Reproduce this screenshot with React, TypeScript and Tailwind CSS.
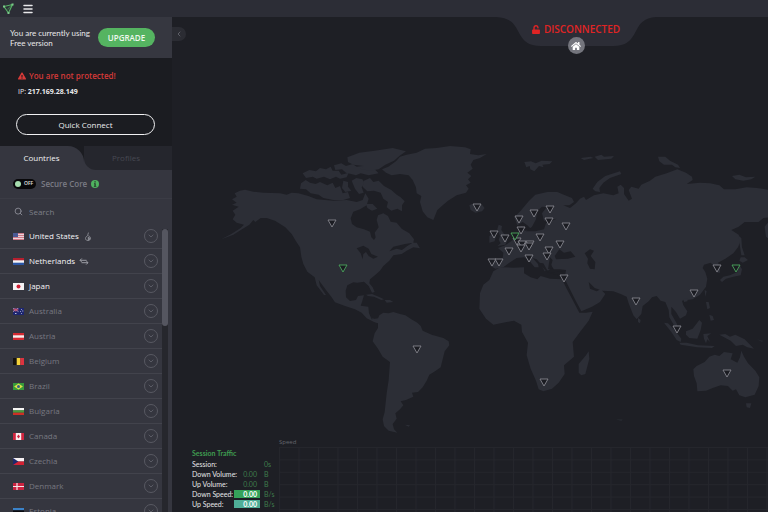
import { useState } from 'react'
import type { ReactNode } from 'react'
import { FaExclamationTriangle, FaHome, FaUnlock } from 'react-icons/fa'
import { ChevronDown, ChevronLeft, Menu, Search } from 'lucide-react'
import { clsx } from 'clsx'

type Country = { name: string; flag: ReactNode; available?: boolean; feature?: 'tor' | 'p2p' }

const countries: Country[] = [
  {
    name: 'United States',
    available: true,
    feature: 'tor',
    flag: (
      <>
        <path fill="#e9d5da" d="M0 0h11v7H0z" />
        <path stroke="#d07a88" d="M0 .5h11M0 2.5h11M0 4.5h11M0 6.5h11" />
        <path fill="#4b5a94" d="M0 0h5v4H0z" />
      </>
    ),
  },
  {
    name: 'Netherlands',
    available: true,
    feature: 'p2p',
    flag: (
      <>
        <path fill="#f4f4f6" d="M0 0h11v7H0z" />
        <path fill="#b5202f" d="M0 0h11v2.3H0z" />
        <path fill="#2a55a5" d="M0 4.7h11V7H0z" />
      </>
    ),
  },
  {
    name: 'Japan',
    available: true,
    flag: (
      <>
        <path fill="#f6f3f4" d="M0 0h11v7H0z" />
        <circle cx="5.5" cy="3.5" r="2" fill="#cf1f33" />
      </>
    ),
  },
  {
    name: 'Australia',
    flag: (
      <>
        <path fill="#1d2670" d="M0 0h11v7H0z" />
        <path stroke="#d9b3c2" strokeWidth=".8" d="M0 0l5.5 3.6M5.5 0L0 3.6" />
        <path stroke="#c94863" strokeWidth=".9" d="M2.8 0v3.6M0 1.8h5.5" />
        <path fill="#dfe3f4" d="M2.2 5h1.2v1H2.2zM8 1h.8v.8H8zM9.4 2.6h.8v.8h-.8zM7 3h.8v.8H7zM8.2 5.2H9V6h-.8z" />
      </>
    ),
  },
  {
    name: 'Austria',
    flag: (
      <>
        <path fill="#d42a32" d="M0 0h11v7H0z" />
        <path fill="#f6eff0" d="M0 2.3h11v2.4H0z" />
      </>
    ),
  },
  {
    name: 'Belgium',
    flag: (
      <>
        <path fill="#15130f" d="M0 0h4v7H0z" />
        <path fill="#f5d23a" d="M3.7 0h3.6v7H3.7z" />
        <path fill="#dc3340" d="M7.3 0H11v7H7.3z" />
      </>
    ),
  },
  {
    name: 'Brazil',
    flag: (
      <>
        <path fill="#379a3b" d="M0 0h11v7H0z" />
        <path fill="#dbe04a" d="M5.5.6l4.4 2.9-4.4 2.9-4.4-2.9z" />
        <circle cx="5.5" cy="3.5" r="1.5" fill="#315f8a" />
      </>
    ),
  },
  {
    name: 'Bulgaria',
    flag: (
      <>
        <path fill="#f6f5f4" d="M0 0h11v2.4H0z" />
        <path fill="#4a9a3b" d="M0 2.3h11v2.4H0z" />
        <path fill="#cf2f25" d="M0 4.7h11V7H0z" />
      </>
    ),
  },
  {
    name: 'Canada',
    flag: (
      <>
        <path fill="#f8eeef" d="M0 0h11v7H0z" />
        <path fill="#cf2640" d="M0 0h2.8v7H0zM8.2 0H11v7H8.2zM5.5 1.5l1.5 2-1.5 2-1.5-2z" />
      </>
    ),
  },
  {
    name: 'Czechia',
    flag: (
      <>
        <path fill="#f6f1f3" d="M0 0h11v3.5H0z" />
        <path fill="#d32234" d="M0 3.5h11V7H0z" />
        <path fill="#1f2a6c" d="M0 0l5.3 3.5L0 7z" />
      </>
    ),
  },
  {
    name: 'Denmark',
    flag: (
      <>
        <path fill="#cb2340" d="M0 0h11v7H0z" />
        <path stroke="#f6e6ea" strokeWidth="1.2" d="M4 0v7M0 3.5h11" />
      </>
    ),
  },
  {
    name: 'Estonia',
    flag: (
      <>
        <path fill="#3b83c9" d="M0 0h11v2.4H0z" />
        <path fill="#0b0b10" d="M0 2.3h11v2.4H0z" />
        <path fill="#f3f3f3" d="M0 4.7h11V7H0z" />
      </>
    ),
  },
]

const servers: [number, number, boolean?][] = [
  [332, 223], [343, 268, true], [417, 349], [544, 382], [477, 207],
  [519, 219], [534, 213], [550, 209], [549, 221], [566, 226],
  [521, 230], [494, 234], [505, 238], [517, 241], [540, 237],
  [560, 244], [509, 251], [522, 244], [521, 248], [530, 244],
  [529, 246], [549, 250], [547, 256], [529, 258], [492, 262],
  [499, 262], [564, 278], [515, 236, true], [717, 268], [736, 268, true],
  [636, 301], [694, 293], [677, 329], [727, 373],
]

const traffic = [
  { label: 'Session:', value: '', unit: '0s', bar: '' },
  { label: 'Down Volume:', value: '0.00', unit: 'B', bar: '' },
  { label: 'Up Volume:', value: '0.00', unit: 'B', bar: '' },
  { label: 'Down Speed:', value: '0.00', unit: 'B/s', bar: 'bg-[#35a35a] font-bold text-white' },
  { label: 'Up Speed:', value: '0.00', unit: 'B/s', bar: 'bg-[#4fae97] font-bold text-white' },
]

function TitleBar() {
  return (
    <header className="flex h-[17px] shrink-0 items-center gap-[7px] bg-[#2c2d36] px-[3px]">
      <svg className="h-3 w-3" viewBox="0 0 12 12" fill="none" stroke="#56b366" strokeWidth="1.1">
        <path d="M1 3.500l8.500-2L5.500 10z" />
        <path d="M9.500 1.500L4.500 6.500" strokeOpacity=".45" />
        <path fill="#7cc98a" stroke="none" d="M0 2.500h2v2H0zM8.500.5h2v2h-2zM4.500 9h2v2h-2z" />
      </svg>
      <button aria-label="Menu" className="text-[#e8e8ea]">
        <Menu className="h-3 w-3" strokeWidth={3} />
      </button>
    </header>
  )
}

function CountryRow({ country }: { country: Country }) {
  return (
    <li
      className={clsx(
        'flex h-[25px] shrink-0 items-center border-b border-[#42434c] pl-[13px] pr-1',
        country.available ? 'font-medium text-[#f4f4f6]' : 'text-[#777881]'
      )}
    >
      <svg className="mr-[5px] h-[7px] w-[11px]" viewBox="0 0 11 7">
        {country.flag}
      </svg>
      <span>{country.name}</span>
      {country.feature === 'tor' && (
        <svg className="ml-[5px] h-[9px] w-2" viewBox="0 0 8 9" fill="none" stroke="#8d8e96" strokeWidth=".9">
          <path d="M5 .5C3.500 1.500 4 2.800 3.800 3.500 2.500 4.400 1.500 5.200 1.500 6.500S2.600 8.500 4 8.500 6.500 7.700 6.500 6.300 5.300 4.300 4.600 3.500" />
          <path fill="#8d8e96" d="M4.300 5v3c1 0 1.600-.7 1.500-1.600S4.900 5.600 4.300 5z" />
        </svg>
      )}
      {country.feature === 'p2p' && (
        <svg className="ml-1 h-[7px] w-[10px]" viewBox="0 0 10 7" fill="none" stroke="#9c9da4">
          <path d="M7.500 2.300H1M2.800.500L1 2.300l1.800 1.800M2.500 4.700H9M7.200 2.900L9 4.700 7.200 6.500" />
        </svg>
      )}
      <button
        aria-label={`Show ${country.name} servers`}
        className="ml-auto flex h-[14px] w-[14px] items-center justify-center rounded-full border border-[#585962] text-[#6d6e77]"
      >
        <ChevronDown className="h-2 w-2" />
      </button>
    </li>
  )
}

function Sidebar() {
  const [secureCore, setSecureCore] = useState(false)

  return (
    <aside className="flex w-[172px] shrink-0 flex-col bg-[#35363f]">
      {/* Plan */}
      <div className="flex h-[41px] shrink-0 items-center justify-between bg-[#363740] pl-[10px] pr-[17px] text-[#e8e8ea]">
        <p className="font-['Lato','Open_Sans',sans-serif] leading-[10px]">
          You are currently using
          <br />
          Free version
        </p>
        <button className="h-[19px] w-[57px] rounded-full bg-[#55b461] font-semibold text-[#eef8ef]">
          UPGRADE
        </button>
      </div>

      {/* Status */}
      <div className="flex h-[88px] shrink-0 flex-col bg-[#1b1c21] px-4 pt-3">
        <p className="flex items-center gap-[3px] pl-[2px] font-semibold leading-3 text-[#d63a38]">
          <FaExclamationTriangle className="h-2 w-2" />
          You are not protected!
        </p>
        <p className="mt-1 pl-[2px] text-[7px] leading-3 text-[#e8e8ea]">
          IP: <b>217.169.28.149</b>
        </p>
        <button className="mt-4 h-[21px] w-full max-w-[139px] rounded-full border border-[#f0f0f2] text-[#ececee]">
          Quick Connect
        </button>
      </div>

      {/* Tabs */}
      <div role="tablist" className="flex h-6 shrink-0 bg-[#1b1c21]">
        <button
          role="tab"
          aria-selected="true"
          className="w-[84px] rounded-tr-2xl bg-[#35363f] pr-px font-medium text-[#f1f1f3]"
        >
          Countries
        </button>
        <div className="flex flex-1 bg-[#35363f]">
          <button
            role="tab"
            aria-selected="false"
            className="flex-1 rounded-bl-xl bg-[#25262d] pr-1 text-[#474852]"
          >
            Profiles
          </button>
        </div>
      </div>

      <label className="flex h-7 shrink-0 items-center pl-[13px] font-semibold text-[#7b7c85]">
        <input
          type="checkbox"
          className="sr-only"
          checked={secureCore}
          onChange={(e) => setSecureCore(e.target.checked)}
        />
        <span className="flex h-[10px] w-[23px] items-center gap-[3px] rounded-full bg-[#08080a] px-[2px] text-[5px] text-[#e4e4e4]">
          <span className="h-[6px] w-[6px] rounded-full bg-[#a5dcae]" />
          {secureCore ? 'ON' : 'OFF'}
        </span>
        <span className="ml-[5px]">Secure Core</span>
        <svg className="ml-1 h-2 w-2" viewBox="0 0 8 8">
          <circle cx="4" cy="4" r="4" fill="#4fb35f" />
          <path fill="#25362b" d="M3.400 1.200h1.300v1.300H3.400zM3 3.200h1.700v2.700h.6v.8H2.900v-.8h.5V4H3z" />
        </svg>
      </label>

      <label className="flex h-[26px] shrink-0 items-center border-t border-[#3b3c45] pl-[14px] text-[#888992]">
        <Search className="mr-[6px] h-[9px] w-[9px]" strokeWidth={2.5} />
        <input
          aria-label="Search countries"
          placeholder="Search"
          className="w-28 bg-transparent outline-none placeholder:text-[#7f8089]"
        />
      </label>

      <div className="flex min-h-0 flex-1">
        <ul className="flex min-w-0 flex-1 flex-col overflow-hidden">
          {countries.map((country) => (
            <CountryRow key={country.name} country={country} />
          ))}
        </ul>
        <div className="mr-1 mt-[5px] w-[6px] bg-[#26272d]">
          <div className="h-[97px] rounded-full bg-[#555660]" />
        </div>
      </div>
    </aside>
  )
}

function WorldMap() {
  return (
    <svg className="block w-full shrink-0" viewBox="172 17 596 420" role="img" aria-label="Server map">
      <g fill="#2c2e36">
        {/* North America */}
        <g transform="translate(220 140) scale(.33333)">
          <path d="M36 178L50 170 44 160 60 152 75 149 100 155 130 158 180 160 200 164 215 158 235 160 265 168 290 178 340 182 380 180 410 186 428 180 436 160 446 176 440 196 420 208 400 215 392 235 396 252 410 262 432 268 450 275 454 292 462 300 467 292 464 278 476 262 470 240 474 226 490 220 504 228 512 245 530 248 545 266 568 280 582 298 580 308 555 312 520 320 508 334 530 326 546 330 562 318 578 308 590 308 600 325 580 322 560 332 545 342 520 346 508 362 490 378 480 392 462 408 450 418 448 430 458 442 464 456 456 458 446 438 432 425 412 428 400 427 382 436 377 452 378 472 390 483 408 480 414 468 432 466 426 486 422 497 445 500 447 520 455 538 475 535 492 545 480 552 462 546 440 535 425 518 405 508 375 498 345 487 335 472 318 450 296 420 300 438 318 465 312 465 290 436 284 412 262 395 250 372 244 350 240 322 228 304 215 282 196 262 165 242 140 234 122 234 106 246 100 240 88 254 66 268 40 284 4 298 34 282 62 264 72 254 50 248 38 238 46 224 38 212 56 200 36 194 50 188z" />
          <path d="M243 130L257 120 270 128 287 132 300 126 322 136 338 128 346 144 360 138 368 160 384 156 390 174 370 180 340 180 310 174 296 164 272 160 258 148 240 146z" />
          <path d="M248 100L268 90 288 94 300 84 318 88 332 80 338 92 356 92 364 104 386 98 380 112 360 116 348 110 330 118 312 110 290 116 278 110 258 114z" />
          <path d="M342 76L364 70 378 78 398 72 410 80 428 78 442 88 466 90 476 100 446 106 422 100 408 106 378 98 366 88 346 90z" />
          <path d="M382 52L418 38 464 32 518 24 558 34 538 48 522 62 496 74 476 88 450 92 420 86 430 78 400 74 384 66z" />
          <path d="M395 122L409 114 427 118 435 130 425 142 431 158 417 162 405 146zM370 122L384 126 384 140 394 152 376 156 366 144z" />
          <path d="M432 122L450 114 460 126 476 122 492 138 514 150 530 164 542 172 554 184 546 196 546 214 532 206 514 212 500 202 504 186 490 176 482 158 462 152 442 154 428 140zM438 192L458 192 472 206 456 212 442 204z" />
          <path d="M486 88L505 80 528 64 540 50 560 44 590 38 615 26 650 24 690 18 735 22 752 28 750 42 775 46 800 42 780 54 760 60 752 74 758 86 742 98 754 108 744 118 752 128 738 136 746 146 738 158 710 166 684 182 668 196 652 210 640 240 622 232 608 214 600 186 604 168 590 160 588 142 578 120 566 106 540 102 515 106 498 98z" />
          <path d="M748 196L756 192 766 200 786 194 794 204 786 214 766 218 752 210z" />
          <path fill="#1e1f25" d="M410 325L430 317 446 326 454 342 474 350 460 356 446 348 438 336 430 342 428 358 422 340z" />
        </g>

        {/* South America and Africa */}
        <g transform="translate(350 280) scale(.33333)">
          <path d="M60 112L82 120 88 106 100 98 116 100 130 96 150 102 166 106 184 118 202 128 212 138 218 152 245 164 280 174 296 184 298 196 284 214 278 238 272 262 255 274 238 284 230 302 218 322 204 336 186 338 190 350 168 360 152 364 160 376 150 388 136 400 140 416 128 432 132 448 142 458 116 452 102 438 98 418 104 396 110 340 116 300 120 246 98 230 84 206 68 184 74 160 84 144 84 126z" />
          <path d="M48 44L66 42 86 50 102 58 94 60 72 50 54 48zM104 60L120 60 130 66 110 68zM164 434L180 436 176 440z" />
          <path d="M390 40L400 14 418 0 430-26 450-38 490-37 522-38 522-20 542-8 562-2 572-12 600-4 636-2 650 26 668 60 688 98 708 98 728 95 716 122 690 156 668 186 672 230 642 256 644 282 626 308 606 326 580 334 566 328 558 302 542 266 530 226 534 188 516 156 514 134 492 122 470 126 430 134 408 116 388 86z" />
          <path d="M686 278L686 252 708 226 716 214 718 236 706 282 694 286z" />
        </g>

        {/* Europe and Asia */}
        <g transform="translate(470 130) scale(.33333)">
          <path d="M133 262L152 242 176 214 196 194 232 186 262 186 276 192 306 204 312 216 298 226 280 226 300 234 318 220 330 206 342 200 348 210 372 196 400 190 430 196 446 190 442 170 452 164 462 174 462 192 476 212 486 206 476 180 484 170 506 176 514 164 540 152 556 140 590 130 622 118 648 128 666 140 668 150 650 162 690 158 720 160 748 166 762 178 796 178 830 172 860 174 900 180 900 262 880 264 866 276 850 276 824 276 806 290 784 300 806 314 812 332 804 352 790 370 766 386 744 398 750 412 750 428 740 428 734 410 722 398 702 404 698 414 706 426 712 446 708 470 690 494 668 508 650 510 636 512 640 526 652 544 648 556 630 566 618 546 604 530 604 552 620 580 624 592 612 586 598 562 596 540 586 516 572 512 560 498 546 502 536 514 518 528 514 552 500 568 490 556 476 520 470 500 452 492 430 484 398 482 374 474 356 456 360 476 380 484 392 478 406 492 390 516 366 530 334 544 316 510 296 470 284 446 288 420 270 418 252 418 240 404 238 420 224 424 214 404 200 388 188 384 204 402 206 412 194 412 176 390 162 382 140 384 118 398 100 412 76 416 62 408 60 388 98 386 100 368 84 354 106 346 128 330 144 316 148 292 156 288 164 302 186 300 172 286 158 276 142 286z" />
          <path d="M82 348L92 340 86 330 90 318 82 298 86 284 96 288 94 300 104 314 112 332 106 344zM58 318L72 310 78 318 74 334 58 338z" />
          <path d="M368 176L382 156 406 138 450 124 454 132 420 144 400 158 388 174 390 186 376 184zM163 96L183 94 197 100 215 92 247 94 239 102 217 104 221 112 207 108 193 124 181 118 179 108 169 112zM332 84L362 80 370 84 342 90zM374 80L394 74 402 80 432 78 424 86 384 90z" />
          <path d="M564 80L586 80 600 92 624 104 630 114 616 112 606 104 582 104 568 94zM786 138L808 134 828 142 856 140 844 148 820 152 796 148zM884 290L900 270 900 330 888 320zM806 318L814 324 816 352 824 376 814 376 810 350zM812 382L824 382 834 390 818 398 808 392zM808 404L816 418 812 436 790 440 768 446 756 456 750 450 760 440 780 436 802 426z" />
          <g fill="#1e1f25">
            <path d="M168 304L186 290 198 268 202 242 216 230 230 232 216 250 222 272 260 266 228 280 222 298 196 304zM254 378L268 358 282 368 302 364 316 380 294 386 258 388zM206 398L230 426 280 440 276 424 236 428 220 400z" />
            <path d="M344 370L360 358 372 362 362 378 376 396 374 418 360 416 352 400 354 386zM240 382L248 390 244 404 248 414 234 418z" />
          </g>
        </g>

        {/* South-east Asia and Oceania */}
        <g transform="translate(570 270) scale(.33333)">
          <path d="M370 298L380 288 404 276 418 260 434 254 448 258 462 246 488 250 482 268 502 278 510 262 514 242 522 260 534 280 556 302 568 322 566 348 554 374 526 382 508 376 498 358 488 362 474 348 452 346 428 354 408 362 382 364 380 340 372 318z" />
          <path d="M528 400L544 400 540 414 530 412zM448 194L466 192 480 200 496 194 524 208 538 222 552 236 532 232 518 224 498 228 482 212zM348 184L368 176 388 150 396 158 392 180 382 206 358 204 348 194zM282 158L294 160 312 178 334 206 332 216 320 210 304 186zM328 218L350 218 384 226 434 228 426 234 382 232 332 224zM400 192L424 190 412 198 420 216 412 208 408 220 402 206zM408 96L416 96 420 114 412 118zM418 134L428 138 432 150 422 152zM404 60L410 64 406 80zM342 86L354 84 352 94 342 96zM204 144L212 150 210 160 204 156z" />
          <path fillOpacity=".6" d="M560 208L580 212 576 216zM138 448L158 448 154 454z" />
        </g>
      </g>

      {servers.map(([x, y, free]) => (
        <path
          key={`${x}-${y}`}
          d={`M${x - 4} ${y - 3}h8l-4 7z`}
          fill="#1b1c22"
          stroke={free ? '#4ba65c' : '#84858c'}
          strokeWidth=".9"
        />
      ))}
    </svg>
  )
}

function StatusBanner() {
  return (
    <div className="absolute right-28 top-0 flex w-40 flex-col items-center">
      <svg className="absolute inset-0 h-[29px] w-full" viewBox="0 0 160 29" preserveAspectRatio="none">
        <path fill="#2c2d36" d="M0 0C14 1 18 6 22 14C27 24 32 29 45 29H117C130 29 135 24 140 14C144 6 148 1 160 0z" />
      </svg>
      <p className="relative mt-[5px] flex items-center gap-1 text-[10px] font-semibold leading-[14px] text-[#e02424]">
        <FaUnlock className="h-[9px] w-2" />
        DISCONNECTED
      </p>
      <button
        aria-label="Home"
        className="relative mt-px flex h-[17px] w-[17px] items-center justify-center rounded-full bg-[#74757d] text-white"
      >
        <FaHome className="h-[10px] w-[10px]" />
      </button>
    </div>
  )
}

function SessionTraffic() {
  return (
    <section className="flex min-h-0 flex-1 pl-5">
      <div className="w-[87px] shrink-0 pt-[11px] font-['Lato','Open_Sans',sans-serif] text-[7px] leading-[10px]">
        <h2 className="mb-px font-bold text-[#3f9b50]">Session Traffic</h2>
        <dl>
          {traffic.map((row) => (
            <div key={row.label} className="flex">
              <dt className="w-[42px] whitespace-nowrap text-[#e6e6e8]">{row.label}</dt>
              <dd className="flex flex-1 text-[#3f7d4c]">
                <span className={clsx('my-px w-[26px] pr-[3px] text-right leading-2', row.bar)}>{row.value}</span>
                <span className="ml-1">{row.unit}</span>
              </dd>
            </div>
          ))}
        </dl>
      </div>
      <div className="flex min-w-0 flex-1 flex-col">
        <h3 className="h-[10px] text-[6px] leading-[10px] text-[#65666d]">Speed</h3>
        <svg className="min-h-0 w-full flex-1">
          <defs>
            <pattern id="grid" width="19.5" height="12.4" patternUnits="userSpaceOnUse">
              <path d="M.5 0v12.400M0 .5h19.500" stroke="#25262c" fill="none" />
            </pattern>
          </defs>
          <rect width="100%" height="100%" fill="url(#grid)" />
        </svg>
      </div>
    </section>
  )
}

export default function App() {
  return (
    <div className="flex h-screen flex-col overflow-hidden bg-[#1e1f25] font-['Open_Sans','Noto_Sans',sans-serif] text-[8px]">
      <TitleBar />
      <div className="flex min-h-0 flex-1">
        <Sidebar />
        <main className="relative flex min-w-0 flex-1 flex-col">
          <WorldMap />
          <SessionTraffic />
          <StatusBanner />
          <button
            aria-label="Collapse sidebar"
            className="absolute left-0 top-[10px] flex h-[14px] w-[14px] items-center justify-center rounded-r-full bg-[#2b2c33] text-[#777880]"
          >
            <ChevronLeft className="h-2 w-2" />
          </button>
        </main>
      </div>
    </div>
  )
}
